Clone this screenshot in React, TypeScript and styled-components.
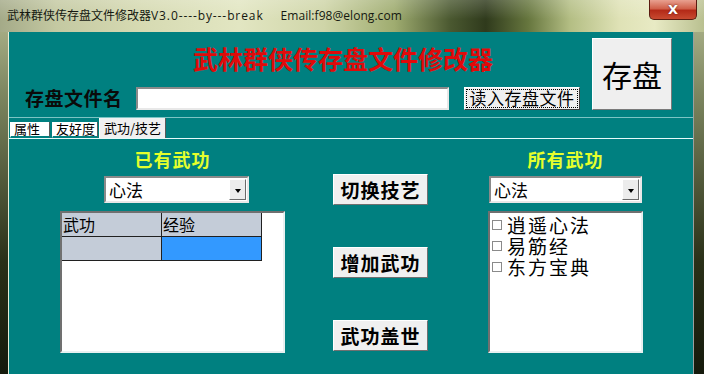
import React from 'react'
import styled, { createGlobalStyle } from 'styled-components'

const CJK = `"Noto Sans CJK SC", "Noto Sans", sans-serif`
const TEAL = '#008080'

const GlobalStyle = createGlobalStyle`
  html, body {
    margin: 0;
    padding: 0;
    background: #1a1f10;
  }
  body {
    font-family: ${CJK};
  }
`

const Window = styled.div`
  width: 704px;
  height: 374px;
  display: flex;
  flex-direction: column;
  overflow: hidden;
  background: linear-gradient(to bottom, #b7bd94 0%, #7d8660 25%, #2a3018 70%, #151a0c 100%);
`

const TitleBar = styled.div`
  height: 32px;
  flex: none;
  display: flex;
  align-items: flex-start;
  padding-left: 7px;
  background:
    linear-gradient(to bottom, rgba(255, 255, 255, 0.18), rgba(255, 255, 255, 0) 60%),
    linear-gradient(
      to right,
      #a4aa88 0%,
      #c4c9a2 8%,
      #d6dab2 20%,
      #e2e6c2 34%,
      #cfd5a8 46%,
      #9fac70 56%,
      #4a5830 64%,
      #2f3a1c 69%,
      #66763e 75%,
      #b4be84 81%,
      #dfe2b6 88%,
      #e8eac4 93%,
      #b9c090 100%
    );
`

const TitleText = styled.div`
  margin-top: 7px;
  font-size: 12px;
  line-height: 15px;
  color: #141810;
  white-space: pre;
`

const TitleAscii = styled.span<{ $ls: number; $ml?: number }>`
  font-family: "Open Sans", "Noto Sans", sans-serif;
  letter-spacing: ${(p) => p.$ls}px;
  margin-left: ${(p) => p.$ml ?? 0}px;
`

const CloseButton = styled.div`
  margin-left: auto;
  margin-right: 7px;
  width: 46px;
  height: 19px;
  border: 1px solid #5a1a10;
  border-top: none;
  border-radius: 0 0 5px 5px;
  background: linear-gradient(to bottom, #e8a090 0%, #d0604a 45%, #b42a18 55%, #c84a30 100%);
  color: #fff;
  font-family: "DejaVu Sans", sans-serif;
  font-weight: bold;
  font-size: 13px;
  display: flex;
  align-items: center;
  justify-content: center;
  text-shadow: 0 0 2px #5a1a10;
`

const Body = styled.div`
  flex: 1;
  display: flex;
  min-height: 0;
`

const SideFrame = styled.div<{ $w: number; $side: 'left' | 'right' }>`
  width: ${(p) => p.$w}px;
  flex: none;
  ${(p) => (p.$side === 'left' ? 'border-right: 1px solid #e8eed8;' : 'border-left: 1px solid #9aa0a0;')}
  box-sizing: border-box;
`

const Client = styled.div`
  flex: 1;
  background: ${TEAL};
  display: flex;
  flex-direction: column;
`

const Header = styled.div`
  height: 86px;
  flex: none;
  display: flex;
  border-bottom: 1px solid #7cc4c4;
  box-sizing: border-box;
`

const HeaderMain = styled.div`
  display: flex;
  flex-direction: column;
`

const BigTitle = styled.div`
  margin: 10px 0 0 184px;
  font-size: 25px;
  line-height: 32px;
  font-weight: bold;
  color: #e00a0a;
  white-space: nowrap;
`

const FileRow = styled.div`
  display: flex;
  align-items: center;
  margin-top: 12px;
  padding-left: 16px;
`

const FileLabel = styled.div`
  width: 111px;
  font-size: 19px;
  line-height: 24px;
  font-weight: bold;
  color: #0a0a0a;
  letter-spacing: 0.5px;
`

const FileInput = styled.div`
  width: 313px;
  height: 23px;
  box-sizing: border-box;
  background: #fff;
  border: 2px solid;
  border-color: #8a8a8a #e8e8e8 #e8e8e8 #8a8a8a;
`

const LoadButton = styled.div`
  margin-left: 15px;
  width: 116px;
  height: 23px;
  box-sizing: border-box;
  background: #f0f0f0;
  border: 1px solid;
  border-color: #fff #404040 #404040 #fff;
  display: flex;
  align-items: center;
  justify-content: center;
  font-size: 17px;
  line-height: 20px;
  color: #000;
  outline: 1px dotted #000;
  outline-offset: -3px;
  letter-spacing: 0.5px;
`

const SaveButton = styled.div`
  margin: 6px 21px 0 auto;
  width: 80px;
  height: 72px;
  box-sizing: border-box;
  background: #efefef;
  border: 1px solid;
  border-color: #fff #7a7a7a #7a7a7a #fff;
  display: flex;
  align-items: center;
  justify-content: center;
  font-size: 30px;
  color: #000;
`

const TabStrip = styled.div`
  height: 20px;
  flex: none;
  display: flex;
  align-items: flex-end;
  padding-left: 1px;
`

const Tab = styled.div<{ $active?: boolean; $w: number; $ml: number }>`
  box-sizing: border-box;
  width: ${(p) => p.$w}px;
  margin-left: ${(p) => p.$ml}px;
  height: ${(p) => (p.$active ? 20 : 16)}px;
  padding-left: ${(p) => (p.$active ? 4 : 3)}px;
  background: ${(p) => (p.$active ? '#f0f0f0' : '#ffffff')};
  border-left: 1px solid #fff;
  border-right: 1px solid #5a5a5a;
  border-bottom: ${(p) => (p.$active ? 'none' : `2px solid ${TEAL}`)};
  font-size: 13px;
  line-height: ${(p) => (p.$active ? 19 : 14)}px;
  color: #000;
  white-space: nowrap;
`

const Panel = styled.div`
  flex: 1;
  display: flex;
  border-top: 1px solid #e6fafa;
  padding-left: 51px;
`

const Column = styled.div<{ $w: number; $ml?: number }>`
  width: ${(p) => p.$w}px;
  margin-left: ${(p) => p.$ml ?? 0}px;
  flex: none;
  display: flex;
  flex-direction: column;
  align-items: center;
`

const GroupLabel = styled.div`
  margin-top: 9px;
  font-size: 18px;
  line-height: 22px;
  font-weight: bold;
  color: #e4ff2c;
  letter-spacing: 1px;
`

const Combo = styled.div<{ $w: number; $ml: number }>`
  align-self: flex-start;
  margin: 6px 0 0 ${(p) => p.$ml}px;
  width: ${(p) => p.$w}px;
  height: 27px;
  box-sizing: border-box;
  background: #fff;
  border: 2px solid;
  border-color: #8a8a8a #e8e8e8 #e8e8e8 #8a8a8a;
  display: flex;
  align-items: center;
  padding: 0 1px 0 3px;
`

const ComboText = styled.div`
  flex: 1;
  font-size: 17px;
  line-height: 22px;
  color: #000;
`

const ComboArrow = styled.div`
  width: 17px;
  height: 21px;
  box-sizing: border-box;
  background: #ececec;
  border: 1px solid;
  border-color: #fff #6a6a6a #6a6a6a #fff;
  display: flex;
  align-items: center;
  justify-content: center;

  &::after {
    content: '';
    border-left: 3px solid transparent;
    border-right: 3px solid transparent;
    border-top: 4px solid #000;
    margin-top: 2px;
  }
`

const Sunken = styled.div<{ $w: number; $h: number }>`
  align-self: flex-start;
  margin-top: 8px;
  width: ${(p) => p.$w}px;
  height: ${(p) => p.$h}px;
  box-sizing: border-box;
  background: #fff;
  border: 2px solid;
  border-color: #707070 #e8f0f0 #e8f0f0 #707070;
`

const GridRow = styled.div`
  display: flex;
`

const GridCell = styled.div<{ $bg: string }>`
  width: 100px;
  height: 24px;
  box-sizing: border-box;
  background: ${(p) => p.$bg};
  border-right: 1px solid #202020;
  border-bottom: 1px solid #202020;
  font-size: 16px;
  line-height: 22px;
  padding-left: 1px;
  color: #000;
`

const ActionButton = styled.div<{ $mt: number }>`
  margin-top: ${(p) => p.$mt}px;
  width: 95px;
  height: 31px;
  box-sizing: border-box;
  background: #f0f0f0;
  border: 1px solid;
  border-color: #fff #707070 #707070 #fff;
  display: flex;
  align-items: center;
  justify-content: center;
  font-size: 19px;
  font-weight: bold;
  color: #000;
  letter-spacing: 1px;
`

const List = styled.div`
  padding-top: 1px;
`

const ListItem = styled.div`
  display: flex;
  align-items: center;
  height: 21px;
  padding-left: 2px;
  font-size: 19px;
  line-height: 20px;
  color: #000;
  letter-spacing: 2px;
`

const Check = styled.span`
  width: 10px;
  height: 10px;
  box-sizing: border-box;
  border: 1px solid #8a8a8a;
  background: #fff;
  margin-right: 5px;
  flex: none;
`

const tabs = [
  { label: '属性', w: 40, ml: 0 },
  { label: '友好度', w: 46, ml: 2 },
  { label: '武功/技艺', w: 67, ml: 1 },
]
const allSkills = ['逍遥心法', '易筋经', '东方宝典']

export default function App() {
  return (
    <>
      <GlobalStyle />
      <Window>
        <TitleBar>
          <TitleText>
            武林群侠传存盘文件修改器
            <TitleAscii $ls={0.9}>V3.0----by---break</TitleAscii>
            <TitleAscii $ls={0.05} $ml={17}>Email:f98@elong.com</TitleAscii>
          </TitleText>
          <CloseButton>X</CloseButton>
        </TitleBar>
        <Body>
          <SideFrame $w={9} $side="left" />
          <Client>
            <Header>
              <HeaderMain>
                <BigTitle>武林群侠传存盘文件修改器</BigTitle>
                <FileRow>
                  <FileLabel>存盘文件名</FileLabel>
                  <FileInput />
                  <LoadButton>读入存盘文件</LoadButton>
                </FileRow>
              </HeaderMain>
              <SaveButton>存盘</SaveButton>
            </Header>

            <TabStrip>
              {tabs.map((t, i) => (
                <Tab key={t.label} $active={i === 2} $w={t.w} $ml={t.ml}>
                  {t.label}
                </Tab>
              ))}
            </TabStrip>

            <Panel>
              {/* 已有武功 */}
              <Column $w={225}>
                <GroupLabel>已有武功</GroupLabel>
                <Combo $w={145} $ml={44}>
                  <ComboText>心法</ComboText>
                  <ComboArrow />
                </Combo>
                <Sunken $w={225} $h={142}>
                  <GridRow>
                    <GridCell $bg="#c4ccd8">武功</GridCell>
                    <GridCell $bg="#c4ccd8">经验</GridCell>
                  </GridRow>
                  <GridRow>
                    <GridCell $bg="#c4ccd8" />
                    <GridCell $bg="#3399ff" />
                  </GridRow>
                </Sunken>
              </Column>

              {/* buttons */}
              <Column $w={95} $ml={48}>
                <ActionButton $mt={35}>切换技艺</ActionButton>
                <ActionButton $mt={42}>增加武功</ActionButton>
                <ActionButton $mt={42}>武功盖世</ActionButton>
              </Column>

              {/* 所有武功 */}
              <Column $w={155} $ml={60}>
                <GroupLabel>所有武功</GroupLabel>
                <Combo $w={153} $ml={1}>
                  <ComboText>心法</ComboText>
                  <ComboArrow />
                </Combo>
                <Sunken $w={155} $h={142}>
                  <List>
                    {allSkills.map((s) => (
                      <ListItem key={s}>
                        <Check />
                        {s}
                      </ListItem>
                    ))}
                  </List>
                </Sunken>
              </Column>
            </Panel>
          </Client>
          <SideFrame $w={11} $side="right" />
        </Body>
      </Window>
    </>
  )
}
